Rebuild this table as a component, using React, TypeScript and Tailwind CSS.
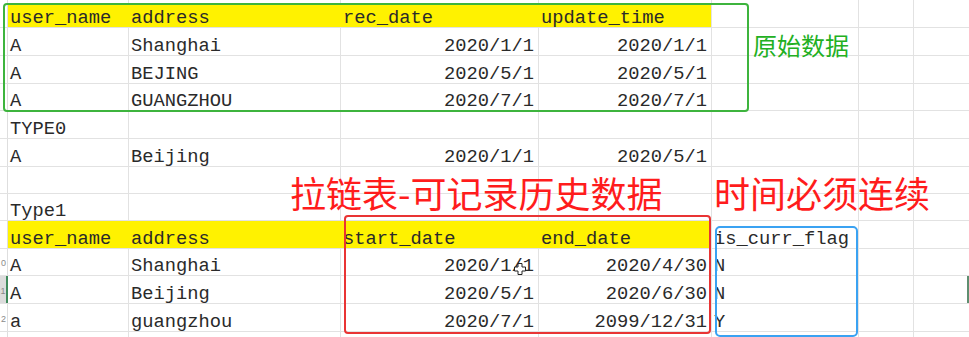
import React from 'react';

type Cell = { text?: string; right?: boolean };

interface RowDef {
  h: string;
  cells: Cell[];
  yellow?: boolean;
  bottom?: boolean;
  num?: string;
  picked?: boolean;
  mark?: boolean;
}

const L = (t: string): Cell => ({ text: t });
const R = (t: string): Cell => ({ text: t, right: true });
const E: Cell = {};

const widths = ['w-[121px]', 'w-[212px]', 'w-[198px]', 'w-[173px]', 'w-[147px]', 'w-[55px]'];

const rows: RowDef[] = [
  { h: 'h-[3px]', cells: [] },
  { h: 'h-[25px]', yellow: true, bottom: true, cells: [L('user_name'), L('address'), L('rec_date'), L('update_time')] },
  { h: 'h-[28px]', bottom: true, cells: [L('A'), L('Shanghai'), R('2020/1/1'), R('2020/1/1')] },
  { h: 'h-[28px]', bottom: true, cells: [L('A'), L('BEJING'), R('2020/5/1'), R('2020/5/1')] },
  { h: 'h-[27px]', bottom: true, cells: [L('A'), L('GUANGZHOU'), R('2020/7/1'), R('2020/7/1')] },
  { h: 'h-[28px]', bottom: true, cells: [L('TYPE0')] },
  { h: 'h-[28px]', bottom: true, cells: [L('A'), L('Beijing'), R('2020/1/1'), R('2020/5/1')] },
  { h: 'h-[27px]', bottom: true, cells: [] },
  { h: 'h-[27px]', bottom: true, cells: [L('Type1')] },
  { h: 'h-[28px]', yellow: true, bottom: true, cells: [L('user_name'), L('address'), L('start_date'), L('end_date'), L('is_curr_flag')] },
  { h: 'h-[27px]', bottom: true, num: '0', cells: [L('A'), L('Shanghai'), R('2020/1/1'), R('2020/4/30'), L('N')] },
  { h: 'h-[28px]', bottom: true, num: '1', picked: true, mark: true, cells: [L('A'), L('Beijing'), R('2020/5/1'), R('2020/6/30'), L('N')] },
  { h: 'h-[28px]', bottom: true, num: '2', cells: [L('a'), L('guangzhou'), R('2020/7/1'), R('2099/12/31'), L('Y')] },
  { h: 'h-[6px]', cells: [] },
];

const SheetRow: React.FC<{ row: RowDef }> = ({ row }) => {
  return (
    <div className={`flex ${row.h} ${row.bottom ? 'border-b border-[#e2e2e2]' : ''}`}>
      <div
        className={`w-[8px] shrink-0 flex items-end justify-center ${
          row.picked ? 'bg-[#dcdcdc] border-r-2 border-[#3f8a5c]' : 'border-r border-[#dedede]'
        }`}
      >
        {row.num && (
          <span className="text-[9px] leading-[10px] pb-[7px] text-[#8a8a8a] font-['Liberation_Sans',sans-serif]">{row.num}</span>
        )}
      </div>
      {widths.map((w, i) => {
        const cell = row.cells[i] ?? E;
        const yellowCell = row.yellow && i < 4;
        return (
          <div
            key={i}
            className={`${w} shrink-0 border-r flex items-end whitespace-nowrap ${
              yellowCell ? (i < 3 ? 'bg-[#fff200] border-[#fff200]' : 'bg-[#fff200] border-[#e2e2e2]') : 'border-[#e2e2e2]'
            } ${cell.right ? 'justify-end pr-[4px]' : 'pl-[2px]'}`}
          >
            {cell.text && <span className="leading-[18px]">{cell.text}</span>}
          </div>
        );
      })}
      <div className="flex-1 flex justify-end">
        {row.mark && <div className="w-[2px] h-full bg-[#5e8e70]" />}
      </div>
    </div>
  );
};

export default function App() {
  return (
    <div className="relative w-[969px] h-[337px] overflow-hidden bg-white text-[#2a2a2a] text-[18.75px] font-['Liberation_Mono','DejaVu_Sans_Mono',monospace]">
      {rows.map((row, i) => (
        <SheetRow key={i} row={row} />
      ))}

      {/* annotations drawn over the sheet */}
      <div className="absolute left-[3px] top-[3px] w-[746px] h-[109px] border-2 border-[#3db43d] rounded-[4px]" />
      <div className="absolute left-[753px] top-[33px] text-[24px] leading-[24px] text-[#22b022] font-['Noto_Sans_CJK_SC',sans-serif] whitespace-nowrap">
        原始数据
      </div>

      <div className="absolute left-[290px] top-[174px] text-[36px] leading-[36px] text-[#ff1c1c] font-['Noto_Sans_CJK_SC',sans-serif] whitespace-nowrap">
        拉链表-可记录历史数据
      </div>
      <div className="absolute left-[714px] top-[174px] text-[36px] leading-[36px] text-[#ff1c1c] font-['Noto_Sans_CJK_SC',sans-serif] whitespace-nowrap">
        时间必须连续
      </div>

      <div className="absolute left-[344px] top-[215px] w-[367px] h-[119px] border-2 border-[#e93434] rounded-[4px]" />
      <div className="absolute left-[715px] top-[226px] w-[143px] h-[111px] border-2 border-[#3aa2f2] rounded-[5px]" />

      <svg className="absolute left-[514px] top-[263px]" width="12" height="12" viewBox="0 0 12 12">
        <path d="M4 0.5h4v3.5h3.5v4H8v3.5H4V8H0.5V4H4z" fill="#fff" stroke="#222" strokeWidth="1" />
      </svg>
    </div>
  );
}
